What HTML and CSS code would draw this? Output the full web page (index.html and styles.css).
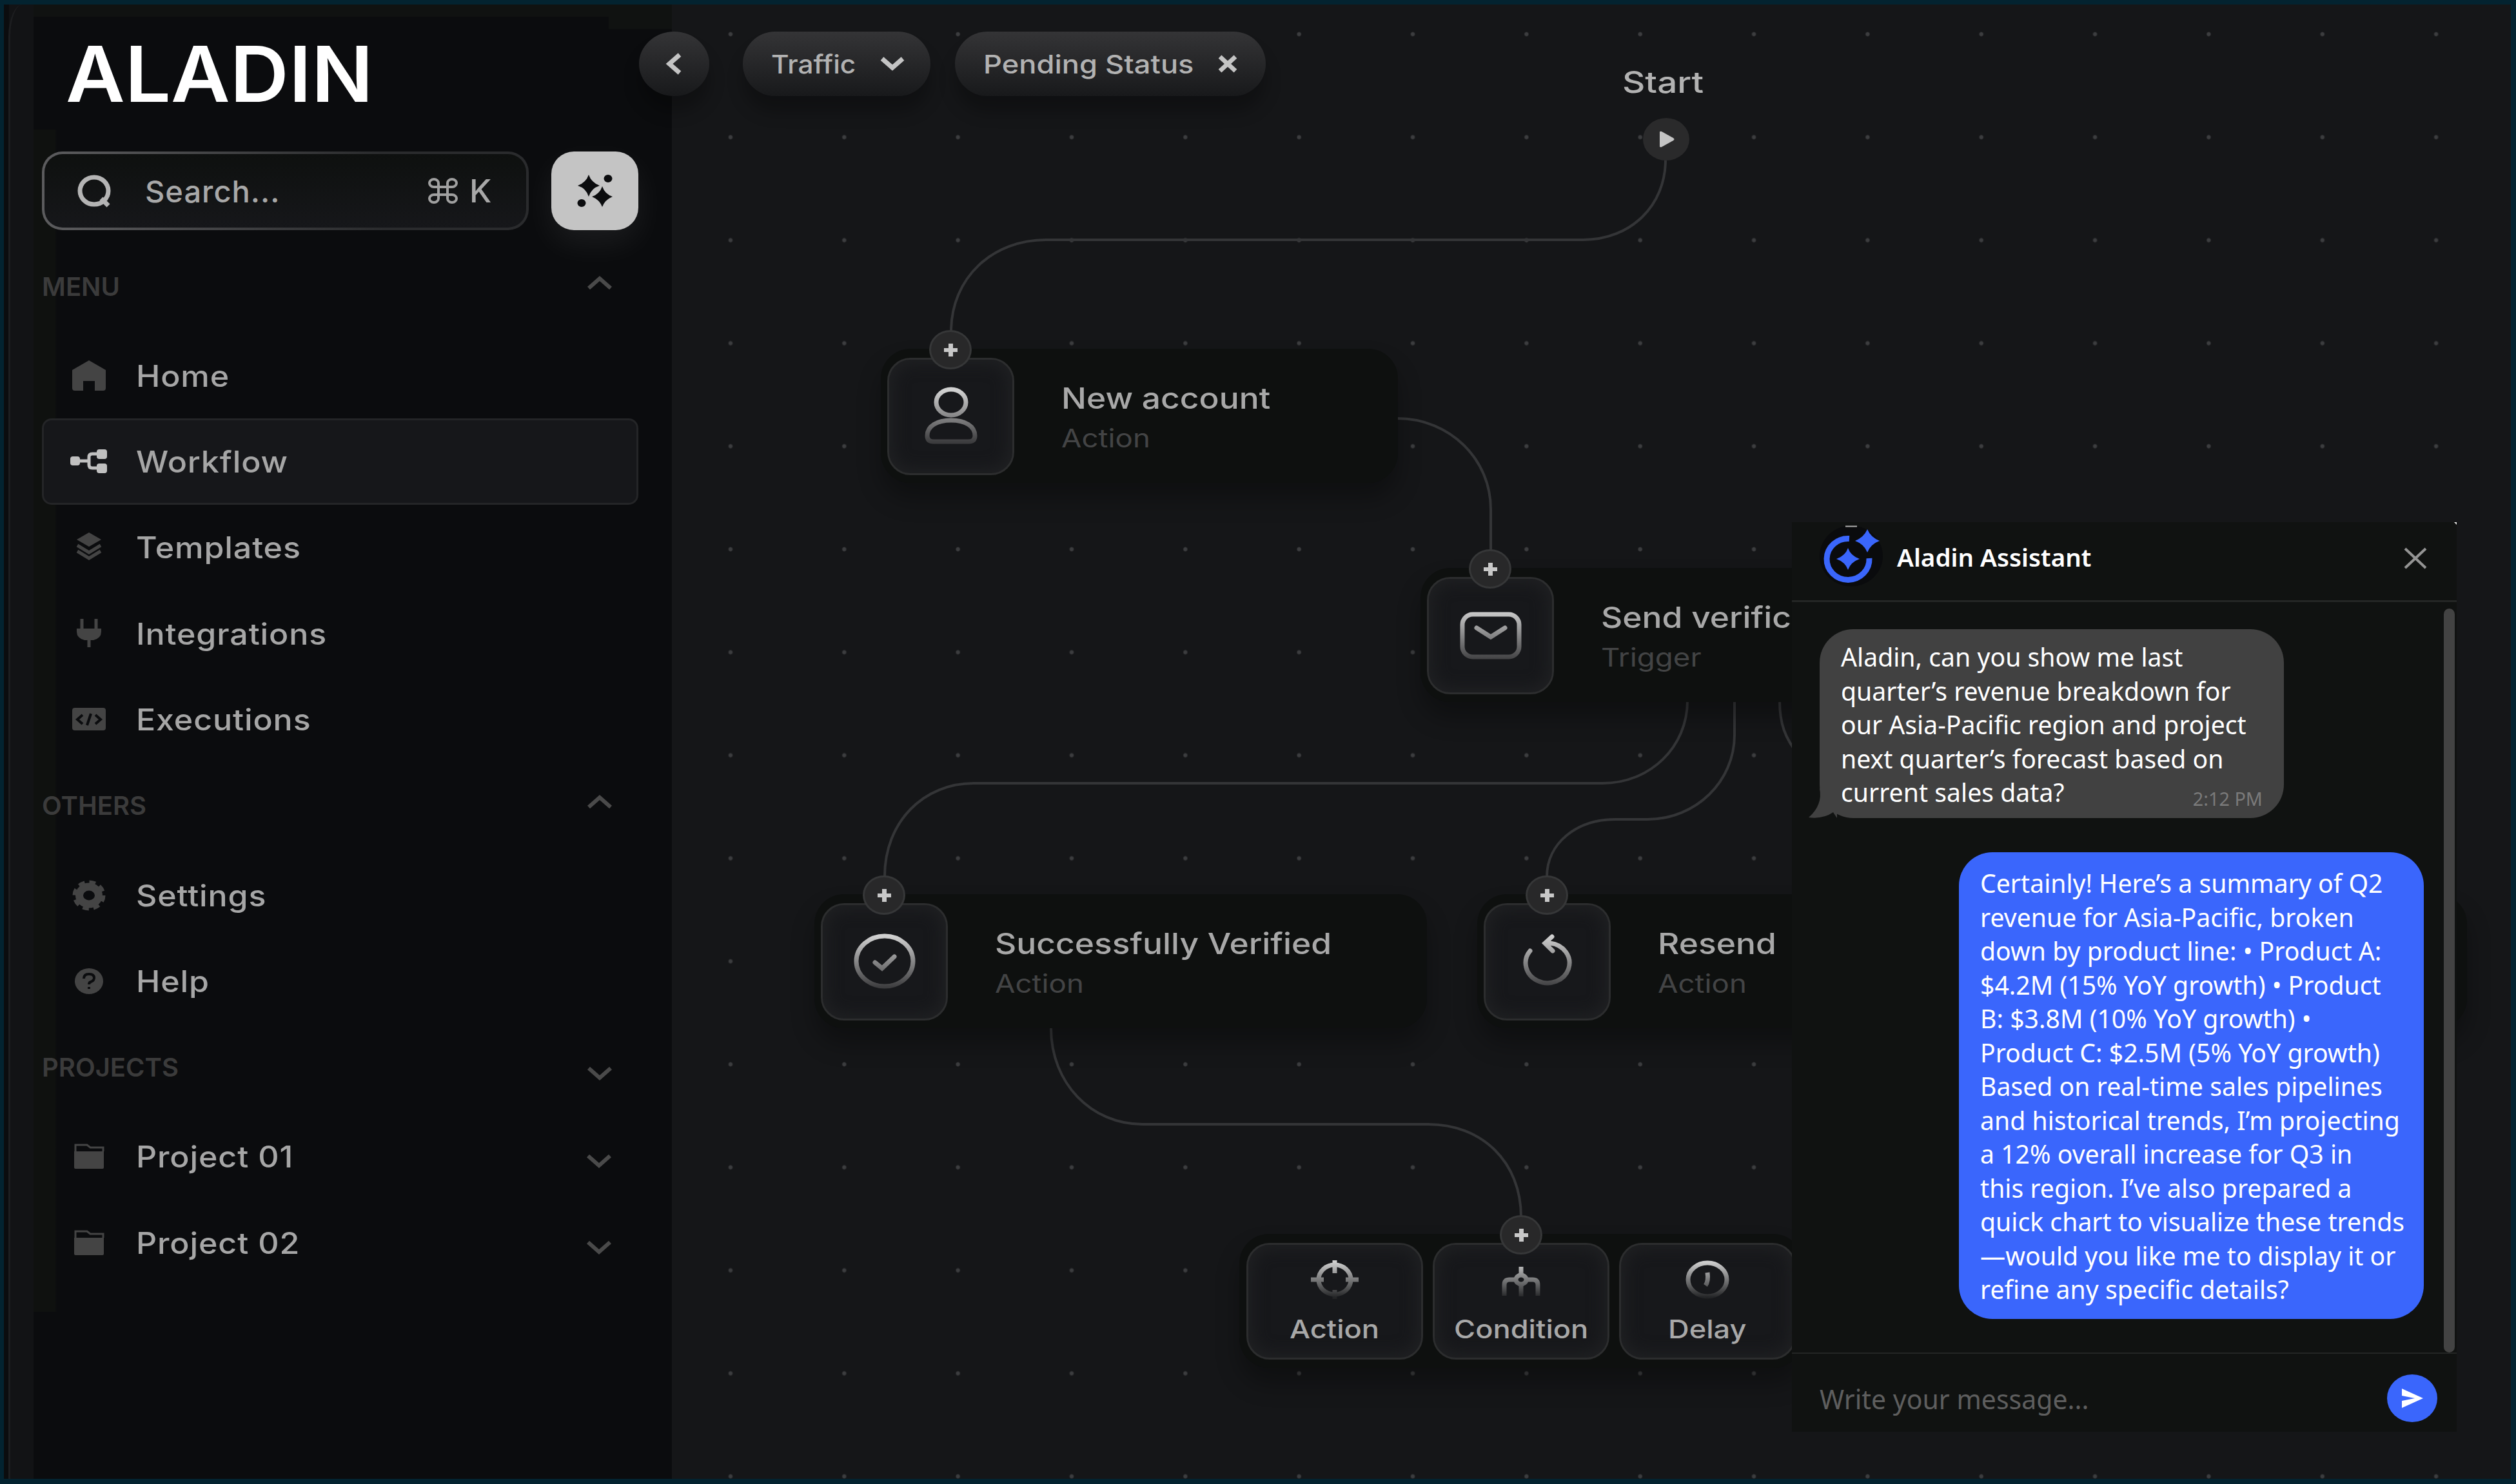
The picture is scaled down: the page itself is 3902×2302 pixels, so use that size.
FILE: index.html
```
<!DOCTYPE html>
<html lang="en">
<head>
    <meta charset="UTF-8">
    <meta name="viewport" content="width=device-width, initial-scale=1.0">
    <title>Aladin - Workflow</title>
    <link rel="stylesheet" href="styles.css">
</head>
<body>
    <aside class="sidebar">
        <div class="logo"><span>ALADIN</span></div>
        <div class="search-row">
            <div class="search">
                <svg class="search-icon" width="56" height="56" viewBox="0 0 56 56">
                    <ellipse cx="27" cy="28" rx="22" ry="21"/>
                    <path d="M38 40l11 11"/>
                </svg>
                <span class="search-text">Search...</span>
                <svg class="cmd" width="48" height="42" viewBox="0 0 48 42">
                    <path d="M17 15V9A7 6 0 1 0 10 15H38A7 6 0 1 0 31 9V33A7 6 0 1 0 38 27H10A7 6 0 1 0 17 33Z"/>
                </svg>
                <span class="key">K</span>
            </div>
            <div class="ai-btn">
                <svg width="54" height="50" viewBox="0 0 54 50">
                    <path d="M17 0Q21 12 34 17Q21 21 17 34Q13 21 0 17Q13 12 17 0z"/>
                    <path d="M38 18Q42 30 54 34Q42 39 38 50Q34 39 22 34Q34 30 38 18z"/>
                    <ellipse cx="47" cy="6" rx="6.500" ry="6"/>
                    <ellipse cx="6" cy="44" rx="6.500" ry="6"/>
                </svg>
            </div>
        </div>

        <div class="group-head menu-head">MENU
            <svg class="chev up" width="40" height="22" viewBox="0 0 40 22"><path d="M3 19L20 4l17 15"/></svg>
        </div>
        <div class="item">
            <svg class="icon" viewBox="0 0 56 56"><path class="fill" d="M28 4L54 19v28q0 4-4 4H37V36H19v15H6q-4 0-4-4V19z"/></svg>
            <span>Home</span>
        </div>
        <div class="item active">
            <svg class="icon" viewBox="0 0 56 56">
                <rect class="fill" x="-1" y="20" width="15" height="14" rx="4"/>
                <rect class="fill" x="40" y="9" width="16" height="15" rx="4"/>
                <rect class="fill" x="40" y="31" width="16" height="15" rx="4"/>
                <path class="line" d="M12 27H28M42 16H33q-5 0-5 5v12q0 5 5 5h9"/>
            </svg>
            <span>Workflow</span>
        </div>
        <div class="item">
            <svg class="icon" viewBox="0 0 56 56">
                <path class="fill" d="M28 5L47 16 28 27 9 16z"/>
                <path class="line" d="M10 25l18 11 18-11M10 34l18 11 18-11"/>
            </svg>
            <span>Templates</span>
        </div>
        <div class="item">
            <svg class="icon" viewBox="0 0 56 56">
                <path class="fill" d="M9 20h38v5q0 10-12 13H21Q9 35 9 25z"/>
                <path class="line" d="M17 5v16M39 5v16M28 36v13"/>
            </svg>
            <span>Integrations</span>
        </div>
        <div class="item">
            <svg class="icon" viewBox="0 0 56 56">
                <rect class="fill" x="2" y="10" width="52" height="35" rx="4"/>
                <path class="cut" d="M18 21l-8 7 8 7M38 21l8 7-8 7M31 19l-6 18"/>
            </svg>
            <span>Executions</span>
        </div>

        <div class="group-head">OTHERS
            <svg class="chev up" width="40" height="22" viewBox="0 0 40 22"><path d="M3 19L20 4l17 15"/></svg>
        </div>
        <div class="item">
            <svg class="icon" viewBox="0 0 56 56">
                <ellipse class="gear-teeth" cx="28" cy="28" rx="21" ry="19"/>
                <ellipse class="gear" cx="28" cy="28" rx="15" ry="13.500"/>
            </svg>
            <span>Settings</span>
        </div>
        <div class="item">
            <svg class="icon" viewBox="0 0 56 56">
                <ellipse class="fill" cx="28" cy="28" rx="22" ry="20"/>
                <path class="cut" d="M20 24q0-7 8-7t8 6q0 4-5 6-3 1-3 4M28 37v3"/>
            </svg>
            <span>Help</span>
        </div>

        <div class="group-head">PROJECTS
            <svg class="chev down" width="40" height="22" viewBox="0 0 40 22"><path d="M3 3l17 15L37 3"/></svg>
        </div>
        <div class="item">
            <svg class="icon" viewBox="0 0 56 56">
                <path class="fill" d="M5 20h46v25q0 2-2 2H7q-2 0-2-2z"/>
                <path class="line hair" d="M7 20V10h18l5 4h20v6"/>
            </svg>
            <span>Project 01</span>
            <svg class="chev row" width="40" height="22" viewBox="0 0 40 22"><path d="M3 3l17 15L37 3"/></svg>
        </div>
        <div class="item">
            <svg class="icon" viewBox="0 0 56 56">
                <path class="fill" d="M5 20h46v25q0 2-2 2H7q-2 0-2-2z"/>
                <path class="line hair" d="M7 20V10h18l5 4h20v6"/>
            </svg>
            <span>Project 02</span>
            <svg class="chev row" width="40" height="22" viewBox="0 0 40 22"><path d="M3 3l17 15L37 3"/></svg>
        </div>
    </aside>

    <main class="canvas">
        <div class="toolbar">
            <div class="back">
                <svg width="28" height="36" viewBox="0 0 28 36"><path d="M22 4L6 18l16 14"/></svg>
            </div>
            <div class="pill traffic"><span>Traffic</span>
                <svg width="40" height="24" viewBox="0 0 40 24"><path d="M4 4l16 14L36 4"/></svg>
            </div>
            <div class="pill pending"><span>Pending Status</span>
                <svg width="32" height="30" viewBox="0 0 32 30"><path d="M4 4l24 22M28 4L4 26"/></svg>
            </div>
        </div>

        <svg class="links" width="3902" height="2302" viewBox="0 0 3902 2302">
            <defs>
                <linearGradient id="fade" gradientUnits="userSpaceOnUse" x1="0" y1="-40" x2="0" y2="40">
                    <stop offset="0" stop-color="#d0d0d0"/>
                    <stop offset="1" stop-color="#3c3c3e"/>
                </linearGradient>
                <linearGradient id="fade-sm" gradientUnits="userSpaceOnUse" x1="0" y1="-28" x2="0" y2="28">
                    <stop offset="0" stop-color="#d0d0d0"/>
                    <stop offset="1" stop-color="#222325"/>
                </linearGradient>
            </defs>
            <path d="M2583 248C2583 318 2530 372 2455 372H1622C1540 372 1475 430 1475 515"/>
            <path d="M2167 649C2248 649 2312 712 2312 790V854"/>
            <path d="M2617 1087C2617 1158 2560 1215 2485 1215H1510C1433 1215 1372 1274 1372 1360"/>
            <path d="M2690 1087V1140C2690 1212 2630 1271 2555 1271H2505C2445 1271 2399 1308 2399 1360"/>
            <path d="M2760 1087C2760 1122 2768 1145 2790 1172"/>
            <path d="M1630 1595C1630 1680 1692 1744 1772 1744H2215C2298 1744 2359 1802 2359 1888"/>
        </svg>

        <div class="start">Start</div>
        <div class="play">
            <svg width="28" height="28" viewBox="0 0 28 28"><path d="M4 3q0-2 3-1l18 10q3 2 0 4L7 26q-3 1-3-1z"/></svg>
        </div>

        <div class="node account">
            <div class="plus"></div>
            <div class="tile"><svg viewBox="-50 -50 100 100"><ellipse cx="0" cy="-22" rx="23" ry="20"/><path d="M-37 30C-37 15-22 6 0 6S37 15 37 30Q37 39 27 39H-27Q-37 39-37 30z"/></svg></div>
            <div class="node-text"><b>New account</b><i>Action</i></div>
        </div>
        <div class="node verify">
            <div class="plus"></div>
            <div class="tile"><svg viewBox="-50 -50 100 100"><rect x="-44" y="-33" width="88" height="66" rx="16"/><path d="M-22-12L0 2 22-12"/></svg></div>
            <div class="node-text"><b>Send verific</b><i>Trigger</i></div>
        </div>
        <div class="node success">
            <div class="plus"></div>
            <div class="tile"><svg viewBox="-50 -50 100 100"><ellipse cx="0" cy="-1" rx="44" ry="39"/><path d="M-15 1L-4 10 15-8"/></svg></div>
            <div class="node-text"><b>Successfully Verified</b><i>Action</i></div>
        </div>
        <div class="node edge"></div>
        <div class="node resend">
            <div class="plus"></div>
            <div class="tile"><svg viewBox="-50 -50 100 100"><path d="M-27-17A34 31 0 1 0 4-29M7-39L-4-29 8-17"/></svg></div>
            <div class="node-text"><b>Resend</b><i>Action</i></div>
        </div>

        <div class="steps">
            <div class="plus"></div>
            <div class="step">
                <svg viewBox="-40 -32 80 64"><ellipse cx="0" cy="0" rx="25" ry="23"/><path d="M0-30v20M0 16v14M-37 0h20M17 0h20"/></svg>
                <span>Action</span>
            </div>
            <div class="step">
                <svg viewBox="-40 -32 80 64"><path d="M0-20V-8M0 8v18M-8 0h-10q-8 0-8 8v17M8 0h10q8 0 8 8v17"/><ellipse cx="0" cy="0" rx="8" ry="7"/></svg>
                <span>Condition</span>
            </div>
            <div class="step">
                <svg viewBox="-40 -32 80 64"><ellipse cx="0" cy="0" rx="30" ry="26"/><path d="M0-11Q2 2-3 9"/></svg>
                <span>Delay</span>
            </div>
        </div>
    </main>

    <section class="chat">
        <header class="chat-head">
            <svg class="chat-logo" width="98" height="95" viewBox="0 0 98 95">
                <ellipse class="disc" cx="49" cy="47.500" rx="49" ry="47"/>
                <path class="glint" d="M40 1.500h18"/>
                <path class="ring" d="M46 20.500A33 32 0 1 0 77 51"/>
                <path class="star" d="M74 6Q79 18 93 24Q79 29 74 42Q69 29 55 24Q69 18 74 6z"/>
                <path class="star" d="M44 35Q48 47 62 52Q48 57 44 69Q40 57 26 52Q40 47 44 35z"/>
            </svg>
            <h1>Aladin Assistant</h1>
            <svg class="close" width="38" height="36" viewBox="0 0 38 36"><path d="M3 3l32 30M35 3L3 33"/></svg>
        </header>
        <div class="chat-body">
            <div class="messages">
                <div class="bubble user">Aladin, can you show me last<br>quarter’s revenue breakdown for<br>our Asia-Pacific region and project<br>next quarter’s forecast based on<br>current sales data?
                    <svg class="tail" width="44" height="46" viewBox="0 0 44 46"><path d="M17 0Q22 26 0 45Q22 48 38 37L44 46V0z"/></svg>
                    <span class="time">2:12 PM</span>
                </div>
                <div class="bubble reply">Certainly! Here’s a summary of Q2<br>revenue for Asia-Pacific, broken<br>down by product line: • Product A:<br>$4.2M (15% YoY growth) • Product<br>B: $3.8M (10% YoY growth) •<br>Product C: $2.5M (5% YoY growth)<br>Based on real-time sales pipelines<br>and historical trends, I’m projecting<br>a 12% overall increase for Q3 in<br>this region. I’ve also prepared a<br>quick chart to visualize these trends<br>—would you like me to display it or<br>refine any specific details?</div>
            </div>
            <div class="scrollbar"></div>
        </div>
        <footer class="chat-foot">
            <span>Write your message...</span>
            <div class="send">
                <svg width="36" height="32" viewBox="0 0 36 32"><path d="M2 1L35 16 2 31V20L22 16 2 12z"/></svg>
            </div>
        </footer>
    </section>
</body>
</html>
```
FILE: styles.css
```
*, *::before, *::after {
    box-sizing: border-box;
}
body {
    position: relative;
    margin: 0;
    width: 3902px;
    height: 2302px;
    display: flex;
    overflow: hidden;
    background: #151618;
    border: solid #032330;
    border-width: 7px 8px 8px 6px;
    font-family: Inter, "Liberation Sans", sans-serif;
    font-weight: 500;
}
svg {
    display: block;
    flex: none;
    fill: none;
    overflow: visible;
}
/*--------- SIDEBAR -------------*/
.sidebar {
    position: relative;
    width: 1036px;
    flex: none;
    padding: 0 52px 0 59px;
    background: linear-gradient(#0b0c0e, #0b0c0e) 46px 19px/892px 175px no-repeat,
                linear-gradient(#101211, #101211) 46px 0/100% 19px no-repeat,
                linear-gradient(#101211, #101211) 938px 0/100% 38px no-repeat,
                linear-gradient(90deg, #0f110f, #0f110f 33px, #0b0c0e) 46px 0/36px 2028px no-repeat,
                linear-gradient(90deg, #0b0c0e 8px, #121315 8px, #121315 46px, #0b0c0e 46px);
}
.sidebar::before {
    content: "";
    position: absolute;
    left: 7px;
    top: 0;
    width: 38px;
    height: 100%;
    border-left: 3px solid #1d1e20;
    border-top-left-radius: 22px 50px;
}
.logo {
    height: 215px;
    margin-bottom: 13px;
    padding-left: 37px;
    font-size: 119px;
    font-weight: 600;
    line-height: 217px;
    color: #fff;
}
.logo span {
    display: inline-block;
    transform: scaleX(1.06);
    transform-origin: left;
}
.search-row {
    display: flex;
    gap: 35px;
}
.search {
    width: 757px;
    height: 122px;
    display: flex;
    align-items: center;
    padding: 0 54px 0 50px;
    border: 4px solid transparent;
    border-radius: 32px;
    background: linear-gradient(#0e100f, #16171a) padding-box,
                linear-gradient(90deg, #5c5c5e, #2a2b2d 70%) border-box;
    color: #a8a8a8;
}
.search-icon {
    stroke: #b4b4b4;
    stroke-width: 7;
}
.search-text {
    flex: 1;
    margin-left: 50px;
    font-size: 47px;
    letter-spacing: 1px;
}
.cmd {
    stroke: #a0a0a0;
    stroke-width: 4;
}
.key {
    margin-left: 17px;
    font-size: 50px;
}
.ai-btn {
    width: 135px;
    height: 122px;
    display: flex;
    align-items: center;
    justify-content: center;
    border-radius: 35px;
    background: #c4c4c4;
    box-shadow: 0 20px 50px rgba(255, 255, 255, 0.07);
}
.ai-btn svg {
    fill: #0b0c0e;
}
.group-head {
    height: 50px;
    margin: 42px 0 47px;
    padding-right: 40px;
    display: flex;
    align-items: center;
    justify-content: space-between;
    font-size: 40px;
    font-weight: 600;
    line-height: 52px;
    color: #3b3b3b;
}
.menu-head {
    margin-top: 63px;
    margin-bottom: 46px;
}
.chev {
    stroke: #4a4a4a;
    stroke-width: 6;
}
.chev.up {
    margin-bottom: 12px;
}
.chev.down {
    margin-top: 18px;
}
.chev.row {
    margin: 14px 0 0 auto;
}
.item {
    height: 133.4px;
    display: flex;
    align-items: center;
    padding: 0 38px 0 42px;
    border: 3px solid transparent;
    border-radius: 15px;
    font-size: 46px;
    color: #a6a6a6;
}
.item span {
    margin-left: 45px;
    letter-spacing: 0.800px;
    transform: scaleX(1.09);
    transform-origin: left;
}
.item.active {
    background: #16171a;
    border-color: #242527;
}
.icon {
    width: 56px;
    height: 56px;
    color: #444;
}
.active .icon {
    color: #c0c0c0;
}
.icon .fill {
    fill: currentColor;
}
.icon .line {
    stroke: currentColor;
    stroke-width: 5;
}
.icon .hair {
    stroke-width: 3;
}
.icon .cut {
    stroke: #0b0c0e;
    stroke-width: 4;
}
.gear-teeth {
    stroke: currentColor;
    stroke-width: 9;
    stroke-dasharray: 9 6.700;
}
.gear {
    stroke: currentColor;
    stroke-width: 12;
}
/*--------- CANVAS -------------*/
.canvas {
    flex: 1;
    background: radial-gradient(ellipse 4px 4px, #3c3d3f 60%, transparent) 2.800px -33.900px/176.350px 159.800px;
}
.toolbar {
    display: flex;
    align-items: flex-start;
    margin-left: -51px;
    padding-top: 42px;
}
.back,
.pill {
    position: relative;
    height: 100px;
    display: flex;
    align-items: center;
    border-radius: 50px;
    background: linear-gradient(#343436, #18191b);
    box-shadow: 0 25px 25px rgba(0, 0, 0, 0.25);
    font-size: 40px;
    color: #b2b2b2;
}
.back svg,
.pill svg {
    stroke: #c4c4c4;
    stroke-width: 7;
}
.back {
    width: 109px;
    border-radius: 50%;
    justify-content: center;
    margin-right: 52px;
}
.pill span {
    transform-origin: left;
}
.traffic {
    width: 291px;
    margin-right: 38px;
    padding: 0 39px 0 44px;
    justify-content: space-between;
}
.traffic span {
    transform: scaleX(1.06);
}
.pending {
    width: 482px;
    padding: 0 43px 0 44px;
    justify-content: space-between;
}
.pending span {
    transform: scaleX(1.13);
}
.links {
    position: absolute;
    left: -6px;
    top: -7px;
    stroke: #343537;
    stroke-width: 4;
}
.start {
    position: absolute;
    left: 2510px;
    top: 90px;
    font-size: 46px;
    line-height: 60px;
    color: #b2b2b2;
    transform: scaleX(1.19);
    transform-origin: left;
}
.play {
    position: absolute;
    left: 2542px;
    top: 176px;
    width: 72px;
    height: 66px;
    display: flex;
    align-items: center;
    justify-content: center;
    border-radius: 50%;
    background: #2a2a2b;
}
.play svg {
    fill: #c4c4c4;
}
.node {
    position: absolute;
    width: 802px;
    height: 208px;
    display: flex;
    padding: 14px 10px 12px;
    border-radius: 46px;
    background: #0e100f;
    box-shadow: 0 24px 36px rgba(0, 0, 0, 0.3);
}
.account {
    left: 1360px;
    top: 534px;
}
.verify {
    left: 2197px;
    top: 874px;
}
.success {
    left: 1257px;
    top: 1380px;
    width: 950px;
}
.resend {
    left: 2285px;
    top: 1380px;
}
.edge {
    left: 3220px;
    top: 1380px;
    width: 600px;
}
.tile,
.step {
    border: 3px solid #2c2d2e;
    border-radius: 36px;
    background: #17181b;
    box-shadow: inset 0 0 24px 6px #202123;
}
.tile {
    width: 197px;
    height: 182px;
    display: flex;
    align-items: center;
    justify-content: center;
}
.tile svg {
    width: 100px;
    height: 100px;
    stroke: url(#fade);
    stroke-width: 7;
    stroke-linecap: round;
}
.node-text {
    margin: 32px 0 0 73px;
    line-height: 62px;
}
.node-text b,
.node-text i {
    display: block;
    font-style: normal;
    font-weight: 500;
    white-space: nowrap;
    transform: scaleX(1.145);
    transform-origin: left;
}
.node-text b {
    font-size: 45px;
    color: #a8a8a8;
}
.node-text i {
    font-size: 39px;
    font-weight: 400;
    color: #434445;
}
.node-text i {
    transform: scaleX(1.17);
}
/* the connector handle, drawn over the top edge of a tile */
.plus {
    position: absolute;
    left: 75px;
    top: -29px;
    width: 66px;
    height: 61px;
    border: 3px solid #363738;
    border-radius: 50%;
    background: linear-gradient(#c8c8c8, #c8c8c8) center/21px 6px no-repeat,
                linear-gradient(#c8c8c8, #c8c8c8) center/7px 20px no-repeat,
                #282829;
}
.steps {
    position: absolute;
    left: 1916px;
    top: 1907px;
    height: 208px;
    display: flex;
    gap: 15px;
    padding: 14px 11px;
    border-radius: 46px;
    background: #0e100f;
    box-shadow: 0 24px 36px rgba(0, 0, 0, 0.3);
}
.steps .plus {
    left: 404px;
    top: -29px;
}
.step {
    width: 274px;
    height: 181px;
    display: flex;
    flex-direction: column;
    align-items: center;
    padding-top: 22px;
}
.step svg {
    width: 80px;
    height: 64px;
    stroke: url(#fade-sm);
    stroke-width: 7;
}
.step span {
    margin-top: 20px;
    font-size: 40px;
    line-height: 50px;
    color: #a8a8a8;
    transform: scaleX(1.13);
}
/*--------- CHAT -------------*/
.chat {
    position: absolute;
    left: 2773px;
    top: 803px;
    width: 1031px;
    height: 1411px;
    display: flex;
    flex-direction: column;
    background: #101211;
    font-family: "Noto Sans", "Open Sans", sans-serif;
    font-weight: 400;
}
.chat::after {
    content: "";
    position: absolute;
    top: 0;
    right: 0;
    border: solid transparent;
    border-width: 0 0 4px 4px;
    border-top: 4px solid #e8e8e8;
}
.chat-head {
    height: 124px;
    display: flex;
    align-items: center;
    padding: 0 45px 17px 43px;
    border-bottom: 3px solid #242625;
}
.chat-logo .disc {
    fill: #0a0b0d;
}
.chat-logo .glint {
    stroke: #b0b0b0;
    stroke-width: 2;
}
.chat-logo .ring {
    stroke: #3a66fc;
    stroke-width: 9;
}
.chat-logo .star {
    fill: #3a66fc;
}
.chat-head h1 {
    flex: 1;
    margin: 3px 0 0 22px;
    font-size: 38.600px;
    font-weight: 600;
    color: #fff;
}
.close {
    stroke: #949494;
    stroke-width: 4;
    margin-top: 7px;
}
.chat-body {
    flex: 1;
    display: flex;
    padding-right: 3px;
}
.messages {
    flex: 1;
    display: flex;
    flex-direction: column;
    gap: 53px;
    padding: 42px 31px 0 43px;
}
.bubble {
    position: relative;
    padding: 17px 0 0 33px;
    border-radius: 52px;
    font-size: 39.200px;
    line-height: 52.500px;
    white-space: nowrap;
    color: #fff;
}
.bubble.user {
    width: 720px;
    height: 293px;
    background: #414141;
}
.bubble.reply {
    align-self: flex-end;
    width: 721px;
    height: 724px;
    padding-top: 22px;
    background: #3a66fc;
}
.tail {
    position: absolute;
    left: -17px;
    bottom: 0;
    fill: #414141;
}
.time {
    position: absolute;
    right: 33px;
    bottom: 10px;
    font-size: 28.800px;
    line-height: 40px;
    color: #7a7a7a;
}
.scrollbar {
    width: 17px;
    margin-top: 10px;
    border-radius: 9px;
    background: #434343;
}
.chat-foot {
    height: 123px;
    display: flex;
    align-items: center;
    justify-content: space-between;
    padding: 18px 30px 0 43px;
    border-top: 2px solid #242625;
    font-size: 41px;
    color: #5e5e5e;
}
.send {
    width: 78px;
    height: 74px;
    margin-bottom: 2px;
    display: flex;
    align-items: center;
    justify-content: center;
    border-radius: 50%;
    background: #3a66fc;
}
.send svg {
    fill: #fff;
}
```
